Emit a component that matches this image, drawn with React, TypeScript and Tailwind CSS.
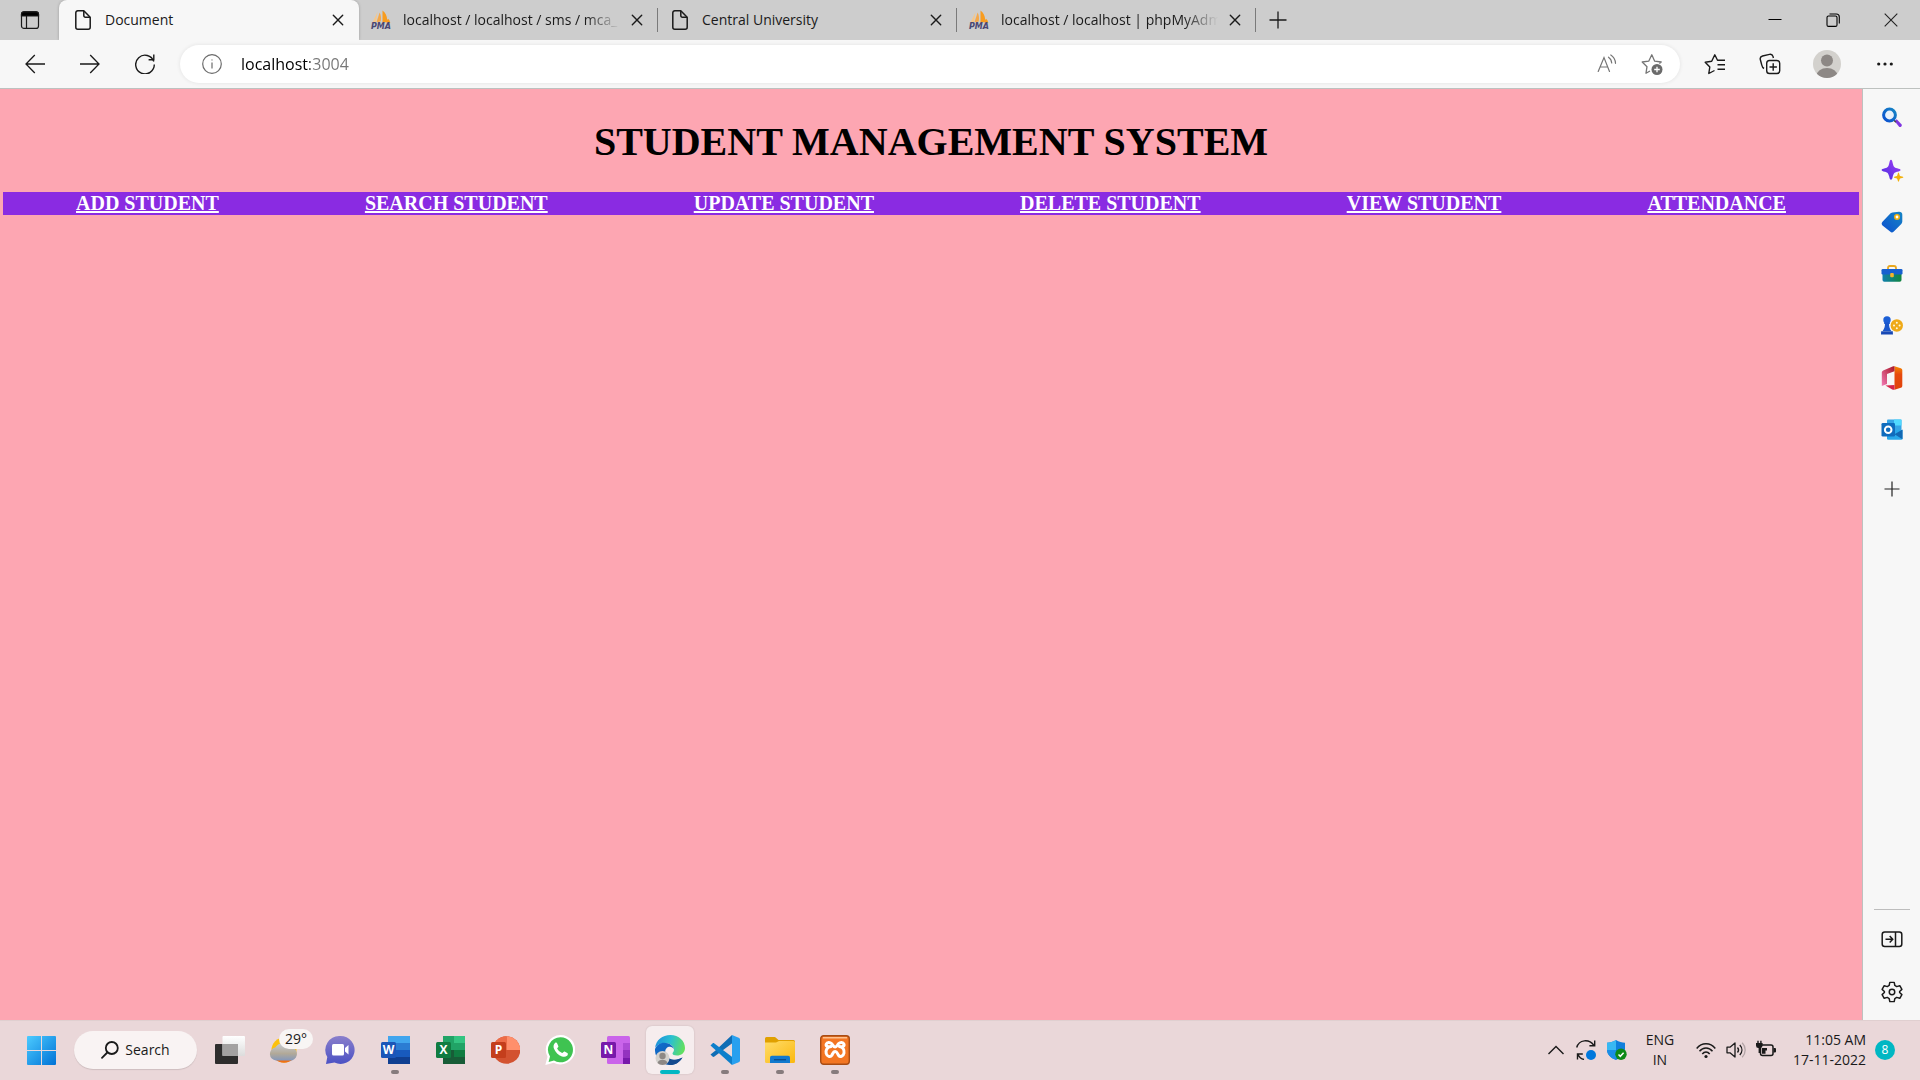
import type { ReactNode } from "react";

const navLinks = [
  "ADD STUDENT",
  "SEARCH STUDENT",
  "UPDATE STUDENT",
  "DELETE STUDENT",
  "VIEW STUDENT",
  "ATTENDANCE",
];

/* ---------- tab strip ---------- */

function DocIcon() {
  return (
    <svg className="size-5" viewBox="0 0 20 20" fill="none" stroke="#1a1a1a" strokeWidth="1.5" strokeLinejoin="round">
      <path d="M4.500 .8H10.800L17.200 7.200V17.200a2 2 0 0 1-2 2H4.800a2 2 0 0 1-2-2V2.800a2 2 0 0 1 2-2Z" />
      <path d="M10.800 1v4.600a1.600 1.600 0 0 0 1.600 1.600h4.600" />
    </svg>
  );
}

function PmaIcon() {
  return (
    <svg className="size-5 overflow-visible" viewBox="0 0 20 20">
      <path d="M6.500 2 1.500 12.500l3.500-.5Z" fill="#f6c78a" />
      <path d="M8.600 2.500 5.500 12.200l4.200-.7C10.400 8 10 5 8.600 2.500Z" fill="#f5a849" />
      <path d="M11.500 .5v11.500l7.800.8c-.4-2-1.200-3.300-2.300-4.100l-.8 1.200C16 6 14.500 2.700 11.500 .5Z" fill="#f89c1f" />
      <text x="10" y="19" textAnchor="middle" fontFamily="DejaVu Sans, sans-serif" fontSize="8" fontWeight="700" fontStyle="italic" fill="#4a4772">
        PMA
      </text>
    </svg>
  );
}

function CloseX() {
  return (
    <svg className="size-3" viewBox="0 0 12 12" stroke="#1a1a1a" strokeWidth="1.400" strokeLinecap="round">
      <path d="M1.300 1.300l9.400 9.400M10.700 1.300 1.300 10.700" />
    </svg>
  );
}

function Tab({ title, icon, active, fade }: { title: string; icon: ReactNode; active?: boolean; fade?: boolean }) {
  return (
    <div
      className={
        active
          ? "relative flex h-full w-75 items-center rounded-t-lg bg-[#f7f7f7] pr-3 pl-3.5 shadow-[0_0_3px_rgba(0,0,0,0.25)]"
          : "relative flex h-full w-[299px] items-center pr-3 pl-3"
      }
    >
      <button className="flex min-w-0 flex-1 items-center gap-3 text-left">
        <span className="shrink-0">{icon}</span>
        <span
          className={
            fade
              ? "w-[217px] overflow-hidden whitespace-nowrap [mask-image:linear-gradient(to_right,#000_84%,transparent)]"
              : "w-[217px] overflow-hidden whitespace-nowrap"
          }
        >
          {title}
        </span>
      </button>
      <button aria-label={`Close ${title}`} className="flex h-6 w-4.5 shrink-0 items-center justify-center">
        <CloseX />
      </button>
      {!active && <span className="absolute top-2 right-0 h-6 w-px bg-[#7a7a7a]" />}
    </div>
  );
}

function TabStrip() {
  return (
    <header className="flex h-10 items-stretch overflow-hidden bg-[#cdcdcd] text-sm text-[#1a1a1a]">
      <button aria-label="Tab actions menu" className="flex w-[59px] items-center justify-center rounded-br-lg">
        <svg className="size-5" viewBox="0 0 20 20" fill="none" stroke="#1a1a1a" strokeWidth="1.200">
          <rect x="1.500" y="1.800" width="17" height="16.600" rx="2.500" />
          <path d="M6.500 6v12" />
          <path d="M1.500 6V4.300a2.500 2.500 0 0 1 2.500-2.500h12a2.500 2.500 0 0 1 2.500 2.500V6Z" fill="#000" />
        </svg>
      </button>
      <Tab active title="Document" icon={<DocIcon />} />
      <Tab fade title="localhost / localhost / sms / mca_" icon={<PmaIcon />} />
      <Tab title="Central University" icon={<DocIcon />} />
      <Tab fade title="localhost / localhost | phpMyAdmin" icon={<PmaIcon />} />
      <button aria-label="New tab" className="flex w-11 items-center justify-center">
        <svg className="size-5" viewBox="0 0 20 20" stroke="#1a1a1a" strokeWidth="1.300">
          <path d="M10 1.500v17M1.500 10h17" />
        </svg>
      </button>
      <div className="ml-auto flex">
        <button aria-label="Minimize" className="flex w-[58px] items-center justify-center">
          <svg className="size-3.5" viewBox="0 0 14 14" stroke="#000">
            <path d="M.5 6.500h13" />
          </svg>
        </button>
        <button aria-label="Restore" className="flex w-[58px] items-center justify-center">
          <svg className="size-3.5" viewBox="0 0 14 14" fill="none" stroke="#000" strokeWidth="1.100">
            <rect x="1" y="3" width="10" height="10.400" rx="1.500" />
            <path d="M3.500 1h6.800a3 3 0 0 1 3 3v6.500" />
          </svg>
        </button>
        <button aria-label="Close window" className="flex w-[58px] items-center justify-center">
          <svg className="size-3.5" viewBox="0 0 14 14" stroke="#222" strokeWidth="1.100">
            <path d="M.7.700l12.600 12.600M13.300.700.700 13.300" />
          </svg>
        </button>
      </div>
    </header>
  );
}

/* ---------- toolbar ---------- */

function Toolbar() {
  return (
    <div className="flex h-[49px] items-center border-b border-[#bdc1bf] bg-[#f7f7f7] pb-px pl-[7px]">
      <button aria-label="Back" className="flex w-[55px] justify-center">
        <svg className="size-5" viewBox="0 0 20 20" fill="none" stroke="#1a1a1a" strokeWidth="1.300">
          <path d="M20 10H1M9.800 1 1 10l8.800 9" />
        </svg>
      </button>
      <button aria-label="Forward" className="flex w-[55px] justify-center">
        <svg className="size-5" viewBox="0 0 20 20" fill="none" stroke="#1a1a1a" strokeWidth="1.300">
          <path d="M0 10h19M10.200 1l8.800 9-8.800 9" />
        </svg>
      </button>
      <button aria-label="Refresh" className="flex w-[55px] justify-center">
        <svg className="size-5" viewBox="0 0 20 20" fill="none" stroke="#1a1a1a" strokeWidth="1.400">
          <path d="M18.800 7.500A9.300 9.300 0 1 0 19.300 10.500" />
          <path d="M18.800 .5v5.300h-5.200" />
        </svg>
      </button>
      <div className="ml-2 flex h-[38px] flex-1 items-center rounded-full bg-white pr-1.5 pl-[22px] shadow-[0_0_4px_rgba(0,0,0,0.09)]">
        <button aria-label="View site information">
          <svg className="size-5" viewBox="0 0 20 20" fill="none" stroke="#6b6b6b" strokeWidth="1.200">
            <circle cx="10" cy="10" r="9.300" />
            <path d="M10 8.500v6" />
            <circle cx="10" cy="5.900" r=".6" fill="#6b6b6b" stroke="none" />
          </svg>
        </button>
        <input
          aria-label="Address"
          defaultValue="localhost:3004"
          className="ml-[19px] h-full flex-1 bg-[linear-gradient(to_right,#000_69px,#757575_69px)] bg-clip-text text-base text-transparent caret-black outline-none"
        />
        <button aria-label="Read aloud" className="flex w-[45px] justify-center">
          <svg className="size-5" viewBox="0 0 20 20" fill="none" stroke="#757575" strokeWidth="1.200" strokeLinecap="round">
            <path d="M1.200 17.500 7 3.500l5.500 14M3 13h7.700" />
            <path d="M11.500 3.200c2 1.300 3 3.200 3.200 5.800M13.800 1c3 1.900 4.500 4.700 4.700 8.300" />
          </svg>
        </button>
        <button aria-label="Add to favorites" className="flex w-[45px] justify-center">
          <svg className="size-[22px]" viewBox="0 0 22 22" fill="none" stroke="#757575" strokeWidth="1.300" strokeLinejoin="round">
            <path d="M9 18 5 20.200l1-6.500L1.200 9l6.500-.8L10.800 1.800l2.900 6.400 6.500.8-1.800 1.600" />
            <circle cx="16" cy="16.500" r="5.500" fill="#6b6b6b" stroke="none" />
            <path d="M16 13.700v5.600M13.200 16.500h5.600" stroke="#fff" />
          </svg>
        </button>
      </div>
      <div className="flex items-center pl-1.5">
        <button aria-label="Favorites" className="flex w-[58px] justify-center">
          <svg className="size-[22px]" viewBox="0 0 22 22" fill="none" stroke="#1a1a1a" strokeWidth="1.400" strokeLinejoin="round">
            <path d="M10.500 17.500 4.800 20.500l1-6.500L1.200 9.200l6.500-.9L10.800 1.800l2.700 5.500h7.500" />
            <path d="M13.500 11.800H21M13.500 16.200H21" />
          </svg>
        </button>
        <button aria-label="Collections" className="flex w-[52px] justify-center">
          <svg className="size-[22px]" viewBox="0 0 22 22" fill="none" stroke="#1a1a1a" strokeWidth="1.400" strokeLinejoin="round">
            <path d="M5 15.500C3 14.500 3 13 2.500 11L1.300 6.500C.8 4.500 1.800 3.500 3.500 3l7-1.600c1.800-.4 3 .3 3.500 2l.4 1.600" />
            <rect x="7.700" y="7.500" width="13" height="13" rx="2.800" />
            <path d="M14.200 10.300v7.400M10.500 14h7.400" />
          </svg>
        </button>
        <button aria-label="Profile" className="flex w-[62px] justify-center">
          <svg className="size-7" viewBox="0 0 28 28">
            <clipPath id="avatar">
              <circle cx="14" cy="14" r="14" />
            </clipPath>
            <g clipPath="url(#avatar)">
              <rect width="28" height="28" fill="#d3d1cd" />
              <circle cx="14" cy="10.500" r="6" fill="#8d8885" />
              <ellipse cx="14" cy="26" rx="10.500" ry="8" fill="#8d8885" />
            </g>
          </svg>
        </button>
        <button aria-label="Settings and more" className="mr-2 flex w-[54px] justify-center">
          <svg className="h-1 w-4" viewBox="0 0 16 4" fill="#1a1a1a">
            <circle cx="1.700" cy="2" r="1.600" />
            <circle cx="8" cy="2" r="1.600" />
            <circle cx="14.300" cy="2" r="1.600" />
          </svg>
        </button>
      </div>
    </div>
  );
}

/* ---------- page ---------- */

function StudentPage() {
  return (
    <main className="flex-1 bg-[#fda6b2] px-[3px] font-['Liberation_Serif',serif] font-bold">
      <h1 className="pt-[30px] pb-[27px] text-center text-[40px] leading-[46px] text-black">STUDENT MANAGEMENT SYSTEM</h1>
      <nav className="flex justify-around bg-[#8a2be2] text-xl leading-[23px] text-white">
        {navLinks.map((label) => (
          <a key={label} href="#" className="underline">
            {label}
          </a>
        ))}
      </nav>
    </main>
  );
}

/* ---------- right side bar ---------- */

const sideIcons: { name: string; art: ReactNode }[] = [
  {
    name: "Search",
    art: (
      <>
        <path d="m13.500 14 2.200-1.800 5 5.200c.8 1-1.200 3.400-2.400 2.500Z" fill="#8136e0" />
        <path d="m12 12.500 3 2.800" stroke="#444" strokeWidth="1.500" />
        <circle cx="8.500" cy="8" r="5.900" fill="#e9f1fb" stroke="url(#blue)" strokeWidth="3" />
      </>
    ),
  },
  {
    name: "Discover",
    art: (
      <>
        <path d="M10 .8c1 0 1.300 1.500 1.800 3.600.8 3 1.300 4 4.300 4.800 2.200.6 3.500.9 3.500 1.800s-1.300 1.200-3.500 1.800c-3 .8-3.500 1.800-4.300 4.800-.5 2.100-.8 3.200-1.800 3.200s-1.300-1.100-1.800-3.200c-.8-3-1.300-4-4.300-4.800C1.700 12.200.6 11.900.6 11s1.100-1.200 3.300-1.800c3-.8 3.500-1.800 4.300-4.800C8.700 2.300 9 .8 10 .8Z" fill="url(#violet)" />
        <path d="M17.500 13.500c.8 0 .8 3 1.600 3.500s3.300.5 3.300 1.300-2.500.8-3.300 1.300-.8 3.200-1.600 3.200-.8-2.700-1.600-3.200-3-.5-3-1.300 2.200-.8 3-1.300.8-3.500 1.600-3.500Z" fill="#f3b10c" />
      </>
    ),
  },
  {
    name: "Shopping",
    art: (
      <>
        <path d="M11.500 1.500 18 .8c2 0 3.500 1 3.300 3v6.700c0 1-.4 1.700-1 2.400l-7.500 7.700c-1.300 1.200-2.500 1.200-3.700 0L1.500 14.500C.4 13.300.4 12 1.500 10.800l7.600-8c.7-.8 1.300-1.200 2.400-1.300Z" fill="url(#blue)" />
        <circle cx="16" cy="6" r="2.200" fill="#fff" stroke="#f3b10c" strokeWidth="1.600" />
      </>
    ),
  },
  {
    name: "Tools",
    art: (
      <>
        <path d="M7 6.500V5c0-1.300.8-2 2-2h4c1.200 0 2 .7 2 2v1.500" fill="none" stroke="#e9a820" strokeWidth="1.800" />
        <path d="M1.500 10h19v7a1.800 1.800 0 0 1-1.800 1.800H3.300A1.800 1.800 0 0 1 1.500 17Z" fill="url(#teal)" />
        <rect x=".5" y="6" width="21" height="5.500" rx="1.300" fill="#1660cf" />
        <rect x="9.200" y="10" width="3.600" height="4.200" rx="1" fill="#f3b42b" />
      </>
    ),
  },
  {
    name: "Games",
    art: (
      <>
        <circle cx="15.800" cy="10.500" r="6.200" fill="#efaa18" />
        <g fill="#fff8de">
          <circle cx="15.800" cy="7.700" r="1" />
          <circle cx="15.800" cy="13.300" r="1" />
          <circle cx="13" cy="10.500" r="1" />
          <circle cx="18.600" cy="10.500" r="1" />
        </g>
        <circle cx="6" cy="5" r="3.700" fill="#1c5fd6" />
        <path d="M3.200 7.500h5.600v1.600H8c.1 3 .7 5 2.300 6.800H1.700C3.300 14 3.900 12 4 9.100h-.8Z" fill="#1a56cb" />
        <path d="M.2 16.200h11.600l.2 3.300H0Z" fill="#1748b5" />
      </>
    ),
  },
  {
    name: "Office",
    art: (
      <>
        <path d="M13.500-.8 19.800 1.200a2 2 0 0 1 1.500 1.900v15.800a2 2 0 0 1-1.500 1.900L13.500 22.800Z" fill="url(#office)" />
        <path d="M13.500-.8v5.100L6 7v10L.8 19V5.800C.8 4.700 1.300 4 2.200 3.500L11-.3c.9-.4 1.700-.5 2.500-.5Z" fill="url(#officeLeft)" />
        <path d="M4.500 18.500 13.500 18v4.800c-.8.100-1.500 0-2.300-.4Z" fill="#d6244a" />
      </>
    ),
  },
  {
    name: "Outlook",
    art: (
      <>
        <rect x="6" y=".5" width="14.500" height="14" rx="1" fill="#35a5e6" />
        <path d="M13 .5h7.500v6H13Z" fill="#50d9ff" />
        <path d="M6 11h15.500v8.500a1.300 1.300 0 0 1-1.300 1.300H7.300A1.300 1.300 0 0 1 6 19.500Z" fill="#28a8ea" />
        <path d="m21.500 10.500-8 4.800 8 5Z" fill="#1268b3" />
        <rect x=".5" y="4" width="13.500" height="13.500" rx="1.300" fill="#0f6cbd" />
        <circle cx="7.200" cy="10.700" r="3.300" fill="none" stroke="#fff" strokeWidth="2" />
      </>
    ),
  },
];

function SideBar() {
  return (
    <aside className="flex w-[58px] shrink-0 flex-col items-center border-l border-[#bdc1bf] bg-[#f7f7f7] pt-[18px] pb-0.5">
      <svg className="absolute size-0" aria-hidden="true">
        <defs>
          <linearGradient id="blue" x1="0" y1="1" x2="1" y2="0">
            <stop offset="0" stopColor="#0b4fd0" />
            <stop offset="1" stopColor="#1685c4" />
          </linearGradient>
          <linearGradient id="violet" x1="0" y1="1" x2="1" y2="0">
            <stop offset="0" stopColor="#4a2ee0" />
            <stop offset="1" stopColor="#a33cf5" />
          </linearGradient>
          <linearGradient id="teal">
            <stop offset="0" stopColor="#0f7fae" />
            <stop offset="1" stopColor="#12853f" />
          </linearGradient>
          <linearGradient id="office" x1="0" y1="0" x2="0" y2="1">
            <stop offset="0" stopColor="#f78a00" />
            <stop offset=".35" stopColor="#e64a0e" />
            <stop offset="1" stopColor="#e0420a" />
          </linearGradient>
          <linearGradient id="officeLeft" x1="1" y1="0" x2="0" y2="1">
            <stop offset="0" stopColor="#a81424" />
            <stop offset="1" stopColor="#f27bb5" />
          </linearGradient>
        </defs>
      </svg>
      {sideIcons.map((icon) => (
        <button key={icon.name} aria-label={icon.name} className="mb-[30px] shrink-0">
          <svg className="size-[22px] overflow-visible" viewBox="0 0 22 22" fill="none">
            {icon.art}
          </svg>
        </button>
      ))}
      <button aria-label="Add" className="mt-2.5">
        <svg className="size-4" viewBox="0 0 16 16" stroke="#222" strokeWidth="1.200">
          <path d="M8 .5v15M.5 8h15" />
        </svg>
      </button>
      <hr className="mt-auto w-9 border-[#bdbdbd]" />
      <button aria-label="Hide sidebar" className="mt-[18px]">
        <svg className="size-[22px]" viewBox="0 0 22 22" fill="none" stroke="#1a1a1a" strokeWidth="1.500">
          <rect x="1.200" y="4" width="19.600" height="14.500" rx="2.500" />
          <path d="M14.500 4v14.500M4.500 11.200h7M8.700 8l3 3.200-3 3.200" />
        </svg>
      </button>
      <button aria-label="Sidebar settings" className="mt-[31px] mb-[15px]">
        <svg className="size-[22px]" viewBox="0 0 24 24" fill="none" stroke="#1a1a1a" strokeWidth="1.600" strokeLinejoin="round">
          <path d="M9.600 1.500h4.800l.7 3.400 2 1.200 3.400-1 2.300 4-2.500 2.300v1.200l2.500 2.300-2.300 4-3.400-1-2 1.200-.7 3.400H9.600l-.7-3.400-2-1.200-3.400 1-2.300-4 2.500-2.300v-1.200L1.200 9.100l2.300-4 3.400 1 2-1.200Z" />
          <circle cx="12" cy="12" r="3" />
        </svg>
      </button>
    </aside>
  );
}

/* ---------- task bar ---------- */

function Letter({ x, y, children, size = 12 }: { x: number; y: number; children: string; size?: number }) {
  return (
    <text x={x} y={y} textAnchor="middle" fontFamily="Open Sans, sans-serif" fontWeight="700" fontSize={size} fill="#fff">
      {children}
    </text>
  );
}

const apps: { name: string; state: "idle" | "open" | "active"; art: ReactNode }[] = [
  {
    name: "Chat",
    state: "idle",
    art: (
      <>
        <defs>
          <linearGradient id="chat" x1="0" y1="0" x2="0" y2="1">
            <stop offset="0" stopColor="#8a7fcb" />
            <stop offset="1" stopColor="#4b51c4" />
          </linearGradient>
        </defs>
        <path d="M15.500 1a14 14 0 1 1-6 26.600L1 29l1.300-7A14 14 0 0 1 15.500 1Z" fill="url(#chat)" />
        <rect x="7" y="9" width="12" height="11.500" rx="1.500" fill="#fff" />
        <path d="m20 13 3.500-3v9.500L20 16.500Z" fill="#fff" />
      </>
    ),
  },
  {
    name: "Word",
    state: "open",
    art: (
      <>
        <rect x="8" y="1" width="22" height="7" fill="#41a5ee" />
        <rect x="8" y="8" width="22" height="7" fill="#2b7cd3" />
        <rect x="8" y="15" width="22" height="7" fill="#185abd" />
        <rect x="8" y="22" width="22" height="7" fill="#103f91" />
        <rect x="1" y="7" width="15" height="16" rx="1.500" fill="#1b56b8" />
        <Letter x={8.500} y={19.300}>W</Letter>
      </>
    ),
  },
  {
    name: "Excel",
    state: "idle",
    art: (
      <>
        <rect x="8" y="1" width="22" height="28" fill="#185c37" />
        <rect x="8" y="1" width="11" height="14" fill="#21a366" />
        <rect x="19" y="1" width="11" height="7" fill="#33c481" />
        <rect x="19" y="8" width="11" height="7" fill="#21a366" />
        <rect x="19" y="15" width="11" height="7" fill="#107c41" />
        <rect x="1" y="7" width="15" height="16" rx="1.500" fill="#107c41" />
        <Letter x={8.500} y={19.300}>X</Letter>
      </>
    ),
  },
  {
    name: "PowerPoint",
    state: "idle",
    art: (
      <>
        <circle cx="16.500" cy="15" r="13.800" fill="#d35230" />
        <path d="M16.500 1.200a13.800 13.800 0 0 1 13.800 13.800H16.500Z" fill="#ff8f6b" />
        <path d="M16.500 1.200a13.800 13.800 0 0 0-13.800 13.800h13.800Z" fill="#ed6c47" />
        <rect x="1" y="7" width="15" height="16" rx="1.500" fill="#c43e1c" />
        <Letter x={8.500} y={19.300}>P</Letter>
      </>
    ),
  },
  {
    name: "WhatsApp",
    state: "idle",
    art: (
      <>
        <path d="M15.500 0a14.700 14.700 0 1 1-6.800 27.700L.3 29.900l2.200-8.200A14.700 14.700 0 0 1 15.500 0Z" fill="#fff" />
        <path d="M15.500 2.300a12.500 12.500 0 1 1-6.500 23.200l-5.400 1.400L5 21.500A12.500 12.500 0 0 1 15.500 2.300Z" fill="#3fc351" />
        <path d="M10 8c.9-.8 1.800-.5 2.200.4l1.200 2.800c.3.800-1.500 1.800-1.200 2.500a9.300 9.300 0 0 0 4.900 4.400c.7.200 1.700-1.800 2.500-1.500l2.700 1.300c1 .5.600 2.100-.3 2.900-1.300 1.200-3.100 1.300-5 .6-3.900-1.400-6.400-4.100-8-7.700-.8-2-.6-4.200 1-5.700Z" fill="#fff" />
      </>
    ),
  },
  {
    name: "OneNote",
    state: "idle",
    art: (
      <>
        <rect x="7" y="1" width="23" height="28" rx="1.500" fill="#ca64ea" />
        <rect x="23" y="8" width="7" height="7" fill="#ae4bd5" />
        <rect x="23" y="15" width="7" height="8" fill="#9332bf" />
        <rect x="23" y="23" width="7" height="6" fill="#7719aa" />
        <rect x="1" y="7" width="15" height="16" rx="1.500" fill="#7719aa" />
        <Letter x={8.500} y={19.300}>N</Letter>
      </>
    ),
  },
  {
    name: "Microsoft Edge",
    state: "active",
    art: (
      <>
        <defs>
          <linearGradient id="edgeTop" x1="0" y1=".3" x2="1" y2=".5">
            <stop offset="0" stopColor="#1c8fdc" />
            <stop offset=".5" stopColor="#2bc0d0" />
            <stop offset="1" stopColor="#62e05c" />
          </linearGradient>
          <linearGradient id="edgeLow" x1="0" y1="0" x2="1" y2="1">
            <stop offset="0" stopColor="#0f6fd0" />
            <stop offset="1" stopColor="#1553a0" />
          </linearGradient>
        </defs>
        <path d="M0 13C1 5 7.500 0 15.300 0 24 0 30 6 30 13c0 5-4 7.500-8 7.500-3 0-4.500-1-4.500-2s1.500-1.500 1.500-4c0-3.500-4-6.500-9-6.500C5 8 1.500 10.500 0 13Z" fill="url(#edgeTop)" />
        <path d="M0 14c1.500-4 5-6.300 9-6.300 5 0 9.500 2.800 10 6.800-.8-1.800-2.300-2.800-4-2.800-3.500 0-5.500 3-4.500 7.300C12 25 19 27 27.500 22.500 24.500 27.500 20 30 15 30 6.500 30-.5 23 0 14Z" fill="url(#edgeLow)" />
        <path d="M11 20c2.500 5 9.500 6.500 16.500 2.500C24.500 27.500 20 30 15 30c-2 0-4-3-4-10Z" fill="#144b8f" />
        <circle cx="7.500" cy="23" r="7" fill="#d3d1cd" />
        <circle cx="7.500" cy="21" r="3.200" fill="#8d8885" />
        <path d="M2.500 28c.7-2.300 2.500-3.300 5-3.300s4.300 1 5 3.300c-2.500 2.600-7.500 2.600-10 0Z" fill="#8d8885" />
      </>
    ),
  },
  {
    name: "Visual Studio Code",
    state: "open",
    art: (
      <>
        <path d="M22 0 5.500 15.500l-5 4 2 2c.6.500 1.200.6 1.900.1L22.200 8.200Z" fill="#0f6db5" />
        <path d="M22 30 .5 10.500l2-2c.6-.5 1.200-.6 1.900-.1L22.200 22Z" fill="#0c7fcb" />
        <path d="M22 0l6.700 2.700c.8.400 1.300 1 1.300 2v20.600c0 1-.5 1.600-1.300 2L22 30Z" fill="#28a0ef" />
      </>
    ),
  },
  {
    name: "File Explorer",
    state: "open",
    art: (
      <>
        <defs>
          <linearGradient id="folder" x1="0" y1="0" x2="1" y2="1">
            <stop offset="0" stopColor="#ffdc6a" />
            <stop offset="1" stopColor="#fbb80e" />
          </linearGradient>
        </defs>
        <path d="M0 3.500A1.500 1.500 0 0 1 1.500 2H9c1 0 1.500.3 2.200 1l2.300 2H28.500A1.500 1.500 0 0 1 30 6.500V12H0Z" fill="#e0a000" />
        <path d="M0 7.500h11L14 6h14.500A1.500 1.500 0 0 1 30 7.500v19a1.500 1.500 0 0 1-1.500 1.500h-27A1.500 1.500 0 0 1 0 26.500Z" fill="url(#folder)" />
        <path d="M5 28v-5.500A1.800 1.800 0 0 1 6.800 20.700h16.400a1.800 1.800 0 0 1 1.800 1.800V28Z" fill="#1279ce" />
        <path d="M9 24.700h12" stroke="#0b4c8c" strokeWidth="1.300" />
      </>
    ),
  },
  {
    name: "XAMPP",
    state: "open",
    art: (
      <>
        <rect x=".7" y=".7" width="28.600" height="28.600" rx="3" fill="#f37623" stroke="#a84c14" strokeWidth="1.400" />
        <path d="M3 2h24v1.500H3Z" fill="#ffc18e" />
        <path
          d="M11 11.500C8 12.500 5.500 11 6.300 9S10 7 11.500 8.500s2 3.500 3.700 3.500 2-2 3.500-3.500 4.400-1.600 5.200.5-1.700 3.500-4.400 2.500c3.500.5 5 3.500 4.500 6.500s-3.800 4.500-5.300 2.500-1.500-4-3.500-4-2.300 2-3.500 4-4.800 1-5.500-2 .8-6.500 4.500-7Z"
          fill="none"
          stroke="#fff"
          strokeWidth="3"
          strokeLinejoin="round"
        />
      </>
    ),
  },
];

function TaskBar() {
  return (
    <footer className="flex h-15 shrink-0 items-center bg-[#ead7d9] pr-[25px] text-[#1a1a1a] shadow-[inset_0_1px_0_#e0cfd0]">
      <button aria-label="Start" className="ml-[27px]">
        <svg className="size-[29px]" viewBox="0 0 29 29">
          <defs>
            <linearGradient id="start" gradientUnits="userSpaceOnUse" x1="0" y1="0" x2="29" y2="29">
              <stop offset="0" stopColor="#4ccbff" />
              <stop offset="1" stopColor="#0072d6" />
            </linearGradient>
          </defs>
          <path d="M1 0h13v14H0V1a1 1 0 0 1 1-1ZM15 0h13a1 1 0 0 1 1 1v13H15ZM0 15h14v14H1a1 1 0 0 1-1-1ZM15 15h14v13a1 1 0 0 1-1 1H15Z" fill="url(#start)" />
        </svg>
      </button>
      <button className="ml-[18px] flex h-[38px] w-[123px] items-center justify-center gap-1.5 rounded-full bg-[#f9f3f3] text-sm shadow-[0_1px_1px_rgba(0,0,0,0.12)]">
        <svg className="size-[18px]" viewBox="0 0 18 18" fill="none" stroke="#1a1a1a" strokeWidth="1.800" strokeLinecap="round">
          <circle cx="10.800" cy="7" r="6" />
          <path d="M6.300 11.500 1 16.800" />
        </svg>
        Search
      </button>
      <button aria-label="Task view" className="ml-[18px]">
        <svg className="size-[30px]" viewBox="0 0 30 30">
          <defs>
            <linearGradient id="pane" x1="0" y1="0" x2="0" y2="1">
              <stop offset="0" stopColor="#fff" />
              <stop offset="1" stopColor="#dcdcdc" />
            </linearGradient>
          </defs>
          <rect x="0" y="9" width="23" height="20" rx="1" fill="#2e2d2d" />
          <rect x="7.500" y="1" width="22.500" height="20" rx="1" fill="url(#pane)" />
          <path d="M7.500 9H23v12H7.500Z" fill="#a3a1a1" />
        </svg>
      </button>
      <button aria-label="Weather" className="relative mr-[13px] ml-6">
        <svg className="size-[30px]" viewBox="0 0 30 30">
          <defs>
            <linearGradient id="cloud" x1="0" y1="0" x2="0" y2="1">
              <stop offset="0" stopColor="#c6cbd4" />
              <stop offset=".6" stopColor="#b2a998" />
              <stop offset="1" stopColor="#8497bb" />
            </linearGradient>
          </defs>
          <circle cx="15" cy="15" r="12.500" fill="#fcc10c" />
          <path d="M6 24a12.500 12.500 0 0 0 18 0Z" fill="#ef7016" />
          <path d="M7 25.500a6.500 6.500 0 0 1-.7-12.900 8.500 8.500 0 0 1 14.500-.8 7 7 0 0 1 2.200 13.700Z" fill="url(#cloud)" />
        </svg>
        <span className="absolute -top-1.5 left-2.5 rounded-full bg-[#f8f5f4] px-1.5 text-sm leading-5">29°</span>
      </button>
      {apps.map((app) => (
        <button key={app.name} aria-label={app.name} className="flex w-[55px] justify-center">
          <span
            className={
              app.state === "active"
                ? "relative flex size-12 items-center justify-center rounded-md bg-[#f6edee] shadow-[0_0_2px_rgba(0,0,0,0.15)]"
                : "relative flex size-12 items-center justify-center"
            }
          >
            <svg className="size-[30px]" viewBox="0 0 30 30">
              {app.art}
            </svg>
            {app.state === "active" && <span className="absolute bottom-0 left-3.5 h-1 w-5 rounded-full bg-[#00b7c3]" />}
            {app.state === "open" && <span className="absolute bottom-0 left-5 h-1 w-2 rounded-full bg-[#867b7d]" />}
          </span>
        </button>
      ))}
      <div className="ml-auto flex items-center text-sm leading-5">
        <button aria-label="Show hidden icons" className="flex w-[30px] justify-center">
          <svg className="h-2.5 w-4" viewBox="0 0 16 10" fill="none" stroke="#1a1a1a" strokeWidth="1.400">
            <path d="m.5 9 7.500-7.500L15.500 9" />
          </svg>
        </button>
        <button aria-label="Sync" className="flex w-[30px] justify-center">
          <svg className="size-5" viewBox="0 0 20 20" fill="none" stroke="#1a1a1a" strokeWidth="1.400">
            <path d="M.7 7.500C3-.5 13-1.500 18 5.500M18.700 .5v5.300h-5.300M1.500 19.500V14h5.300M2 14.500c1.200 3 3.200 4.300 6 5" />
            <circle cx="15" cy="15" r="5" fill="#0078dc" stroke="none" />
          </svg>
        </button>
        <button aria-label="Windows Security" className="flex w-8 justify-center">
          <svg className="size-5" viewBox="0 0 20 20">
            <path d="M9 0c3 2 6 2.700 9 2.800V9c0 5.500-3.500 8.800-9 11-5.500-2.200-9-5.500-9-11V2.800C3 2.700 6 2 9 0Z" fill="#0f7fdc" />
            <path d="M9 0v10H0V2.800C3 2.700 6 2 9 0Z" fill="#38b8f2" />
            <path d="M9 10v10c-5.500-2.200-9-5.500-9-10Z" fill="#1b8ee6" />
            <circle cx="14" cy="14.300" r="5.700" fill="#0d8a16" />
            <path d="m11.500 14.500 1.800 1.800 3.300-3.600" fill="none" stroke="#fff" strokeWidth="1.500" />
          </svg>
        </button>
        <button className="w-[54px] text-center">
          ENG
          <br />
          IN
        </button>
        <button aria-label="Network, volume and battery" className="flex items-center gap-2.5 pl-[9px]">
          <svg className="size-5" viewBox="0 0 20 20" fill="none" stroke="#1a1a1a" strokeWidth="1.500">
            <path d="M.7 8.500c5-6.300 13.600-6.300 18.600 0M3.500 11.300c3.600-4.400 9.400-4.400 13 0M6.300 14c2.100-2.600 5.300-2.600 7.400 0" />
            <circle cx="10" cy="16.500" r="1.600" fill="#1a1a1a" stroke="none" />
          </svg>
          <svg className="size-5" viewBox="0 0 20 20" fill="none" stroke="#1a1a1a" strokeWidth="1.300" strokeLinejoin="round">
            <path d="M1 7.200h3L9 3v14l-5-4.200H1Z" />
            <path d="M11.500 7.500c1.300 1.500 1.300 3.500 0 5M13.800 5c2.800 3 2.800 7 0 10" />
            <path d="M16.200 2.800c4 4.200 4 10.200 0 14.400" stroke="#b3a5a7" />
          </svg>
          <svg className="size-5" viewBox="0 0 20 20" fill="#1a1a1a">
            <rect x="4.500" y="5" width="12.500" height="10.500" rx="2" fill="none" stroke="#1a1a1a" strokeWidth="1.500" />
            <path d="M17.500 8h1.500a1 1 0 0 1 1 1v2.500a1 1 0 0 1-1 1h-1.500ZM6 8h5v2.500H9.500V13.800H6Z" />
            <path d="M0 3h1.300V.8h1.400V3h1.500V.8h1.400V3h1v2.500A2.500 2.500 0 0 1 4.200 8v5H2.600V8A2.500 2.500 0 0 1 0 5.500Z" />
          </svg>
        </button>
        <button className="ml-[17px] text-right">
          11:05 AM
          <br />
          17-11-2022
        </button>
        <button aria-label="8 notifications" className="ml-[9px] flex size-5 items-center justify-center rounded-full bg-[#00b7c3] text-xs text-white">
          8
        </button>
      </div>
    </footer>
  );
}

export default function App() {
  return (
    <div className="flex min-h-screen flex-col bg-[#f7f7f7] font-['Open_Sans',sans-serif]">
      <TabStrip />
      <Toolbar />
      <div className="flex flex-1">
        <StudentPage />
        <SideBar />
      </div>
      <TaskBar />
    </div>
  );
}
